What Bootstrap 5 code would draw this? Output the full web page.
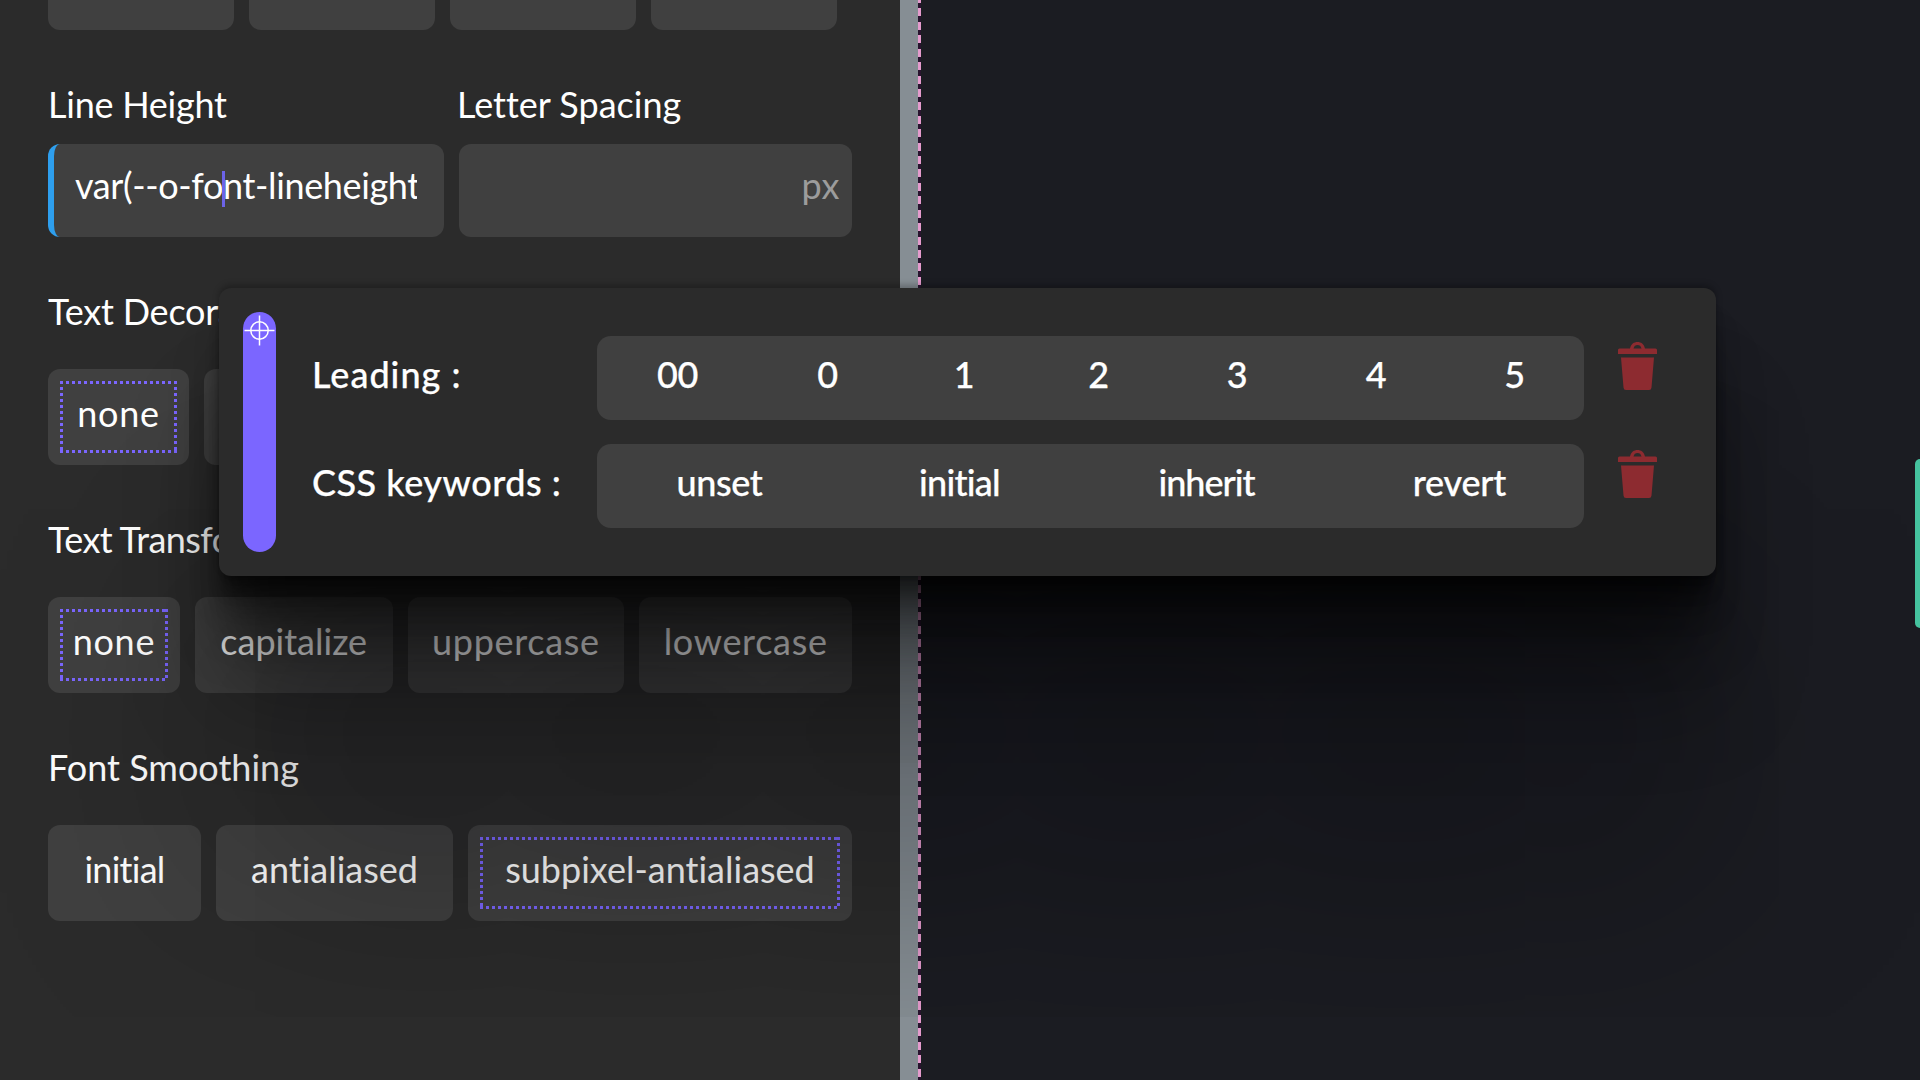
<!DOCTYPE html>
<html lang="en">
<head>
<meta charset="utf-8">
<meta name="viewport" content="width=device-width, initial-scale=1">
<title>Typography panel</title>
<link rel="stylesheet" href="https://cdn.jsdelivr.net/npm/bootstrap@5.3.0/dist/css/bootstrap.min.css">
<style>
  :root { --surface: #2b2b2b; --control: #404040; --accent: #7b66ff; }
  body { background: #1b1c22; color: #fff; font: 400 36px/36px Lato, sans-serif; font-variant-ligatures: none; }
  .stage { width: 1920px; height: 1080px; }
  .panel { width: 900px; padding: 0 48px; background: var(--surface); }
  .splitter { width: 18px; background: #868e94; }
  .guide { width: 3px; background: repeating-linear-gradient(#e59bcd 0 8px, #29142f 8px 13.42px) 0 -5px / 3px 1100px; }
  .swatch { width: 186px; height: 30px; background: var(--control); border-radius: 0 0 12px 12px; }
  .g15 { gap: 15px; }
  .field-row { margin-top: 56px; gap: 15px; }
  .field { height: 93px; margin-top: 22px; padding: 23px 0 0 27px; background: var(--control); border-radius: 12px; }
  .field.linked { width: 396px; padding-left: 21px; border-left: 6px solid #2e9fee; }
  .field.plain { width: 393px; padding-right: 12px; color: #9c9c9c; letter-spacing: .6px; }
  .clip-text { width: 342px; height: 50px; letter-spacing: -.37px; }
  .caret { left: 168px; top: 27px; width: 3px; height: 36px; background: #6c63e8; }
  .group { margin-top: 56px; }
  .options { margin-top: 40px; }
  .opt { height: 96px; padding: 26px 0 0; background: var(--control); border-radius: 12px; text-align: center; white-space: nowrap; }
  .dotted::after { content: ""; position: absolute; inset: 12px;
    background:
      repeating-linear-gradient(90deg, var(--accent) 0 3px, transparent 3px 6px) 0 0 / 100% 3px no-repeat,
      repeating-linear-gradient(90deg, var(--accent) 0 3px, transparent 3px 6px) 0 100% / 100% 3px no-repeat,
      repeating-linear-gradient(var(--accent) 0 3px, transparent 3px 6px) 0 0 / 3px 100% no-repeat,
      repeating-linear-gradient(var(--accent) 0 3px, transparent 3px 6px) 100% 0 / 3px 100% no-repeat; }
  .w141 { width: 141px; } .w132 { width: 132px; } .w198 { width: 198px; } .w217 { width: 217px; } .w213 { width: 213px; }
  .w153 { width: 153px; } .w237 { width: 237px; } .w384 { width: 384px; }
  .ls-a { letter-spacing: .7px; } .ls-b { letter-spacing: 0; } .ls-c { letter-spacing: -.75px; } .ls-d { letter-spacing: -.4px; }
  .popup { left: 219px; top: 288px; width: 1497px; height: 288px; padding: 24px; background: var(--surface); border-radius: 12px; font-weight: 500;
    box-shadow:
      0 -3px 6px 0 rgb(0 0 0 / .27), 0 9px 6px -6px rgb(0 0 0 / .28), 0 21px 15px -6px rgb(0 0 0 / .30),
      0 36px 30px -6px rgb(0 0 0 / .32), 0 66px 54px -6px rgb(0 0 0 / .33), 0 123px 99px -6px rgb(0 0 0 / .33),
      0 300px 240px -6px rgb(0 0 6 / .33); }
  .grip { width: 33px; height: 240px; border-radius: 17px; background: var(--accent); padding-top: 3px; }
  .token-rows { margin: 24px 0 0 36px; gap: 24px; -webkit-text-stroke: .25px #fff; }
  .token-row { height: 84px; }
  .token-label { width: 285px; padding-top: 20px; white-space: nowrap; }
  .tokens { width: 987px; padding-top: 20px; background: var(--control); border-radius: 14px; display: grid; text-align: center; }
  .scale { grid-template-columns: 161px 139px 134px 135px 142px 136px 141px; letter-spacing: -.4px; }
  .words { grid-template-columns: 245px 235px 259px 247px; }
  .bin { margin: 6px 0 0 34px; width: 39px; height: 48px; }
  .edge-tab { right: 0; top: 459px; width: 5px; height: 169px; background: #45c39f; border-radius: 5px 0 0 5px; }
</style>
</head>
<body class="overflow-hidden">
<div class="stage d-flex position-relative overflow-hidden">
  <aside class="panel d-flex flex-column flex-shrink-0">
    <div class="d-flex g15"><div class="swatch"></div><div class="swatch"></div><div class="swatch"></div><div class="swatch"></div></div>

    <div class="field-row d-flex">
      <div>
        <div style="letter-spacing:-.25px">Line Height</div>
        <div class="field linked position-relative">
          <div class="clip-text overflow-hidden text-nowrap">var(--o-font-lineheight</div>
          <span class="caret position-absolute"></span>
        </div>
      </div>
      <div>
        <div style="margin-left:-2px">Letter Spacing</div>
        <div class="field plain text-end">px</div>
      </div>
    </div>

    <section class="group">
      <div style="letter-spacing:-.2px">Text Decoration</div>
      <div class="options d-flex g15">
        <div class="opt w141 dotted position-relative ls-a">none</div>
        <div class="opt w217">underline</div>
      </div>
    </section>

    <section class="group">
      <div style="letter-spacing:-.6px">Text Transform</div>
      <div class="options d-flex g15">
        <div class="opt w132 dotted position-relative ls-a">none</div>
        <div class="opt w198 ls-b">capitalize</div>
        <div class="opt w217 ls-a">uppercase</div>
        <div class="opt w213 ls-a">lowercase</div>
      </div>
    </section>

    <section class="group">
      <div class="ls-b">Font Smoothing</div>
      <div class="options d-flex g15">
        <div class="opt w153 ls-c">initial</div>
        <div class="opt w237">antialiased</div>
        <div class="opt w384 dotted position-relative ls-b">subpixel-antialiased</div>
      </div>
    </section>
  </aside>
  <div class="splitter flex-shrink-0"></div>
  <div class="guide flex-shrink-0"></div>
  <main class="flex-grow-1"></main>

  <div class="popup position-absolute d-flex">
    <div class="grip flex-shrink-0 d-flex justify-content-center">
      <svg width="31" height="31" viewBox="-15.5 -15.5 31 31" fill="none" stroke="#fff" stroke-width="1.5"><circle r="8.7"/><path d="M-15 0H15M0-15V15"/></svg>
    </div>
    <div class="token-rows d-flex flex-column">
      <div class="token-row d-flex">
        <div class="token-label" style="letter-spacing:1px">Leading :</div>
        <div class="tokens scale"><span>00</span><span>0</span><span>1</span><span>2</span><span>3</span><span>4</span><span>5</span></div>
        <svg class="bin" viewBox="0 0 39 48" fill="#8d2b30"><path d="M1.5 6.5H12C13 2 16 0 19.500 0S26 2 27 6.500H37.500Q39 6.500 39 8V12H0V8Q0 6.500 1.500 6.500ZM15.500 6.500H23.500C23 4 21.500 3 19.500 3S16 4 15.500 6.500Z"/><path d="M3 15.500H36L33.500 45.500Q33.300 48 31 48H8Q5.700 48 5.500 45.500Z"/></svg>
      </div>
      <div class="token-row d-flex">
        <div class="token-label" style="letter-spacing:.5px">CSS keywords :</div>
        <div class="tokens words"><span class="ls-d">unset</span><span class="ls-c">initial</span><span style="letter-spacing:-1px">inherit</span><span style="letter-spacing:-.2px">revert</span></div>
        <svg class="bin" viewBox="0 0 39 48" fill="#8d2b30"><path d="M1.5 6.5H12C13 2 16 0 19.500 0S26 2 27 6.500H37.500Q39 6.500 39 8V12H0V8Q0 6.500 1.500 6.500ZM15.500 6.500H23.500C23 4 21.500 3 19.500 3S16 4 15.500 6.500Z"/><path d="M3 15.500H36L33.500 45.500Q33.300 48 31 48H8Q5.700 48 5.500 45.500Z"/></svg>
      </div>
    </div>
  </div>
  <div class="edge-tab position-absolute"></div>
</div>
<script src="https://cdn.jsdelivr.net/npm/bootstrap@5.3.0/dist/js/bootstrap.bundle.min.js"></script>
</body>
</html>
